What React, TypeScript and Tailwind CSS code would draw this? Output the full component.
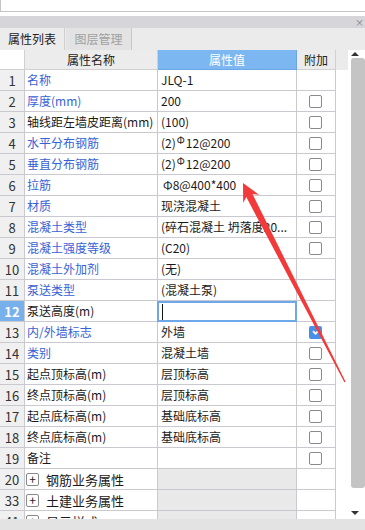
import React from "react";

type Row = {
  n: string;
  name: string;
  blue?: boolean;
  value?: React.ReactNode;
  cb?: boolean;
  checked?: boolean;
  selected?: boolean;
  group?: boolean;
};

const Steel = () => <span className="text-[10px] relative top-[-3px] mx-[1px]">Φ</span>;

const rows: Row[] = [
  { n: "1", name: "名称", blue: true, value: "JLQ-1" },
  { n: "2", name: "厚度(mm)", blue: true, value: "200", cb: true },
  { n: "3", name: "轴线距左墙皮距离(mm)", value: "(100)", cb: true },
  { n: "4", name: "水平分布钢筋", blue: true, value: <>(2)<Steel />12@200</>, cb: true },
  { n: "5", name: "垂直分布钢筋", blue: true, value: <>(2)<Steel />12@200</>, cb: true },
  { n: "6", name: "拉筋", blue: true, value: <span className="pl-[2px]">Φ8@400*400</span>, cb: true },
  { n: "7", name: "材质", blue: true, value: "现浇混凝土", cb: true },
  { n: "8", name: "混凝土类型", blue: true, value: "(碎石混凝土 坍落度20...", cb: true },
  { n: "9", name: "混凝土强度等级", blue: true, value: "(C20)", cb: true },
  { n: "10", name: "混凝土外加剂", blue: true, value: "(无)" },
  { n: "11", name: "泵送类型", blue: true, value: "(混凝土泵)" },
  { n: "12", name: "泵送高度(m)", selected: true },
  { n: "13", name: "内/外墙标志", blue: true, value: "外墙", checked: true },
  { n: "14", name: "类别", blue: true, value: "混凝土墙", cb: true },
  { n: "15", name: "起点顶标高(m)", value: "层顶标高", cb: true },
  { n: "16", name: "终点顶标高(m)", value: "层顶标高", cb: true },
  { n: "17", name: "起点底标高(m)", value: "基础底标高", cb: true },
  { n: "18", name: "终点底标高(m)", value: "基础底标高", cb: true },
  { n: "19", name: "备注", value: "", cb: true },
  { n: "20", name: "钢筋业务属性", group: true },
  { n: "33", name: "土建业务属性", group: true },
  { n: "41", name: "显示样式", group: true },
];

function Checkbox({ checked }: { checked?: boolean }) {
  if (checked) {
    return (
      <div className="w-[13px] h-[13px] rounded-[2px] bg-[#4a8fe7] flex items-center justify-center">
        <svg width="9" height="9" viewBox="0 0 9 9">
          <polyline points="2,3.2 4.5,5.8 7,3.2" fill="none" stroke="white" strokeWidth="1.8" />
        </svg>
      </div>
    );
  }
  return <div className="w-[13px] h-[13px] rounded-[2px] border border-[#8a8a8a] bg-white" />;
}

export default function App() {
  return (
    <div
      className="w-[365px] h-[530px] overflow-hidden relative bg-white text-[12px] text-[#1a1a1a]"
      style={{ fontFamily: '"Noto Sans CJK SC", "Noto Sans", sans-serif' }}
    >
      {/* top area */}
      <div className="h-[12px] border-b border-l border-[#c4c4c8] bg-white" />
      <div className="h-[4px] bg-white" />
      <div className="h-[12px] bg-[#d5d5da] flex items-center justify-end pr-[1px]">
        <span className="text-[9px] leading-none text-[#777]">×</span>
      </div>
      {/* tabs */}
      <div className="h-[22px] bg-[#ebebeb] flex items-stretch">
        <div className="w-[65px] bg-[#ececec] border-r border-[#cfcfcf] flex items-center justify-center text-[12px] leading-none text-[#222]">
          属性列表
        </div>
        <div className="ml-[1px] w-[66px] bg-[#e3e3e3] border-r border-[#c9c9c9] flex items-center justify-center text-[12px] leading-none text-[#a0a0a0]">
          图层管理
        </div>
      </div>
      {/* body */}
      <div className="flex h-[469px]">
        <div className="w-[358px] flex flex-col overflow-hidden">
          {/* header */}
          <div className="flex h-[20px] shrink-0 bg-[#ebebeb]">
            <div className="w-[25px] bg-white border-r border-b border-[#d0d0d0]" />
            <div className="w-[133px] bg-[#ececec] border-r border-b border-[#d0d0d0] flex items-center justify-center leading-none text-[#222]">
              属性名称
            </div>
            <div className="w-[139px] bg-[#7db7f1] border-r border-b border-[#6aa6e6] flex items-center justify-center leading-none text-white">
              属性值
            </div>
            <div className="w-[39px] bg-[#ececec] border-r border-b border-[#d0d0d0] flex items-center justify-center leading-none text-[#222]">
              附加
            </div>
            <div className="flex-1" />
          </div>
          {rows.map((r) => (
            <div key={r.n} className="flex h-[21px] shrink-0">
              <div
                className={
                  r.selected
                    ? "w-[25px] bg-[#78b0ec] border-r border-b border-[#c9c9cf] flex items-center justify-center leading-none text-[13px] text-white font-bold"
                    : "w-[25px] bg-[#f0f0f0] border-r border-b border-[#c9c9cf] flex items-center justify-center leading-none text-[13px] text-[#333]"
                }
              >
                {r.n}
              </div>
              <div
                className={
                  "w-[133px] border-r border-b border-[#c9c9cf] flex items-center leading-none whitespace-nowrap overflow-hidden " +
                  (r.group ? "pl-[1px] " : "pl-[2px] ") +
                  (r.blue ? "text-[#3762d6]" : "text-[#1a1a1a]")
                }
              >
                {r.group ? (
                  <>
                    <span className="w-[13px] h-[13px] border border-[#8a8a8a] rounded-[2px] flex items-center justify-center mr-[7px] text-[12px] leading-none bg-white text-[#222] shrink-0">
                      +
                    </span>
                    <span className="text-[13px]">{r.name}</span>
                  </>
                ) : (
                  r.name
                )}
              </div>
              {r.selected ? (
                <div className="w-[140px] ml-[-1px] border-2 border-[#6ea8e8] bg-white flex items-center pl-[3px]">
                  <div className="w-[1px] h-[16px] bg-[#111]" />
                </div>
              ) : (
                <div
                  className={
                    "w-[139px] border-r border-b border-[#c9c9cf] flex items-center pl-[3px] leading-none whitespace-nowrap overflow-hidden " +
                    (r.group ? "bg-[#e9e9e9]" : "bg-white")
                  }
                >
                  {r.value}
                </div>
              )}
              <div className="w-[39px] border-r border-b border-[#c9c9cf] flex items-center justify-center pr-[1px]">
                {r.checked ? <Checkbox checked /> : r.cb ? <Checkbox /> : null}
              </div>
              <div className="flex-1 bg-white" />
            </div>
          ))}
        </div>
        {/* scrollbar */}
        <div className="w-[17px] bg-white flex flex-col">
          <div className="h-[8px] relative">
            <svg width="10" height="8" viewBox="0 0 10 8" className="absolute left-[2px] top-[2px]">
              <polygon points="5,0 1,4 9,4" fill="#333" />
            </svg>
          </div>
          <div className="h-[430px] ml-[3px] bg-[#c4c4c4] rounded-[3px]" />
          <div className="h-[22px]" />
          <div className="relative h-[6px]">
            <svg width="10" height="6" viewBox="0 0 10 6" className="absolute left-[2px] top-0">
              <polygon points="1,1 9,1 5,5" fill="#333" />
            </svg>
          </div>
        </div>
      </div>
      <div className="absolute left-0 bottom-0 w-full h-[11px] bg-[#e3e3e3]" />
      {/* red annotation arrow */}
      <svg className="absolute left-0 top-0 pointer-events-none" width="365" height="530" viewBox="0 0 365 530">
        <polygon
          points="243,183 259.2,194.9 252.5,193.9 345.6,381.7 344.4,382.3 246.3,197.1 243.2,203.1"
          fill="#f23a3a"
        />
      </svg>
    </div>
  );
}
